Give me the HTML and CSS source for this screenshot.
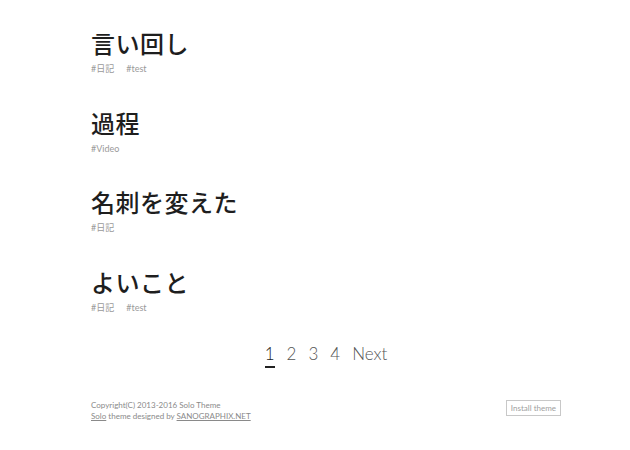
FILE: index.html
```
<!DOCTYPE html>
<html lang="ja">
<head>
<meta charset="utf-8">
<link rel="stylesheet" href="styles.css">
</head>
<body>
<div class="page">
  <main class="posts">
    <article class="post">
      <h2 class="title">言い回し</h2>
      <div class="tags"><a>#日記</a><a>#test</a></div>
    </article>
    <article class="post">
      <h2 class="title">過程</h2>
      <div class="tags"><a>#Video</a></div>
    </article>
    <article class="post">
      <h2 class="title">名刺を変えた</h2>
      <div class="tags"><a>#日記</a></div>
    </article>
    <article class="post">
      <h2 class="title">よいこと</h2>
      <div class="tags"><a>#日記</a><a>#test</a></div>
    </article>
  </main>
  <nav class="pager">
    <a class="current">1</a>
    <a>2</a>
    <a>3</a>
    <a>4</a>
    <a>Next</a>
  </nav>
  <footer class="footer">
    <div class="credits">
      <div>Copyright(C) 2013-2016 Solo Theme</div>
      <div><a class="u">Solo</a> theme designed by <a class="u">SANOGRAPHIX.NET</a></div>
    </div>
    <a class="install">Install theme</a>
  </footer>
</div>
</body>
</html>
```

FILE: styles.css
```
html, body {
  margin: 0;
  padding: 0;
  background: #fff;
}
body {
  font-family: Lato, "Noto Sans CJK JP", sans-serif;
  color: #222;
}
.page {
  width: 470px;
  margin-left: 91px;
  padding-top: 27px;
}
.posts {
  display: flex;
  flex-direction: column;
  gap: 31.5px;
}
.title {
  margin: 0;
  font-family: "Noto Sans CJK JP", sans-serif;
  font-size: 24px;
  font-weight: 500;
  line-height: 32px;
  letter-spacing: 0.5px;
  color: #1e1e1e;
}
.tags {
  display: flex;
  gap: 12px;
  font-size: 9px;
  line-height: 12px;
  margin-top: 4px;
  color: #9a9a9a;
}
.pager {
  display: flex;
  justify-content: center;
  gap: 12px;
  margin-top: 28.5px;
  font-size: 17px;
  font-weight: 300;
  color: #555;
  line-height: 24px;
}
.pager a {
  border-bottom: 2px solid transparent;
}
.pager .current {
  color: #222;
  border-bottom-color: #222;
}
.footer {
  display: flex;
  justify-content: space-between;
  align-items: flex-start;
  margin-top: 32px;
  font-size: 8px;
  line-height: 11px;
  color: #8a8a8a;
}
.u {
  text-decoration: underline;
}
.install {
  border: 1px solid #c8c8c8;
  color: #a0a0a0;
  font-size: 8px;
  line-height: 14px;
  padding: 0 4px;
}
```
